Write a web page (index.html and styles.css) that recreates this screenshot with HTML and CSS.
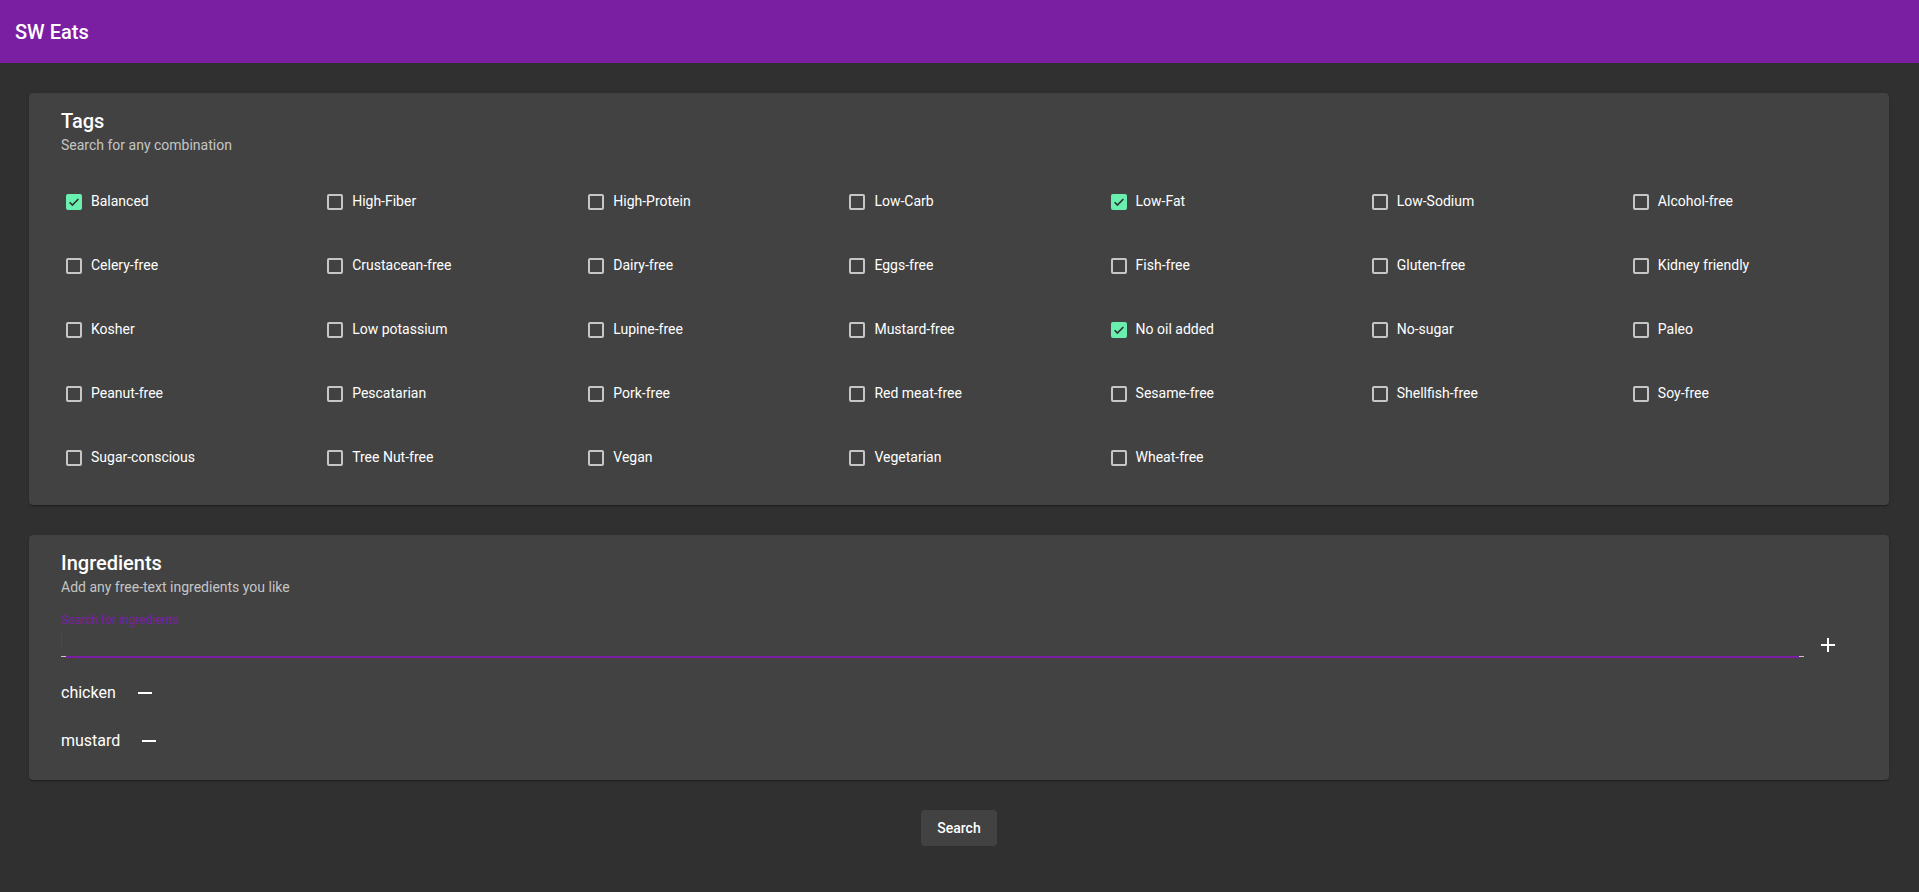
FILE: index.html
```html
<!DOCTYPE html>
<html lang="en">
<head>
<meta charset="utf-8">
<title>SW Eats</title>
<link rel="stylesheet" href="styles.css">
</head>
<body>
<header class="toolbar"><span class="brand">SW Eats</span></header>
<main class="main">
  <section class="card">
    <div class="card-head">
      <h2 class="card-title">Tags</h2>
      <p class="card-sub">Search for any combination</p>
    </div>
    <div class="tag-grid">
      <label class="tag"><span class="box checked"><svg viewBox="0 0 16 16"><polyline points="3.6,8.2 6.4,11 12.4,5"/></svg></span><span class="tag-text">Balanced</span></label>
      <label class="tag"><span class="box"></span><span class="tag-text">High-Fiber</span></label>
      <label class="tag"><span class="box"></span><span class="tag-text">High-Protein</span></label>
      <label class="tag"><span class="box"></span><span class="tag-text">Low-Carb</span></label>
      <label class="tag"><span class="box checked"><svg viewBox="0 0 16 16"><polyline points="3.6,8.2 6.4,11 12.4,5"/></svg></span><span class="tag-text">Low-Fat</span></label>
      <label class="tag"><span class="box"></span><span class="tag-text">Low-Sodium</span></label>
      <label class="tag"><span class="box"></span><span class="tag-text">Alcohol-free</span></label>

      <label class="tag"><span class="box"></span><span class="tag-text">Celery-free</span></label>
      <label class="tag"><span class="box"></span><span class="tag-text">Crustacean-free</span></label>
      <label class="tag"><span class="box"></span><span class="tag-text">Dairy-free</span></label>
      <label class="tag"><span class="box"></span><span class="tag-text">Eggs-free</span></label>
      <label class="tag"><span class="box"></span><span class="tag-text">Fish-free</span></label>
      <label class="tag"><span class="box"></span><span class="tag-text">Gluten-free</span></label>
      <label class="tag"><span class="box"></span><span class="tag-text">Kidney friendly</span></label>

      <label class="tag"><span class="box"></span><span class="tag-text">Kosher</span></label>
      <label class="tag"><span class="box"></span><span class="tag-text">Low potassium</span></label>
      <label class="tag"><span class="box"></span><span class="tag-text">Lupine-free</span></label>
      <label class="tag"><span class="box"></span><span class="tag-text">Mustard-free</span></label>
      <label class="tag"><span class="box checked"><svg viewBox="0 0 16 16"><polyline points="3.6,8.2 6.4,11 12.4,5"/></svg></span><span class="tag-text">No oil added</span></label>
      <label class="tag"><span class="box"></span><span class="tag-text">No-sugar</span></label>
      <label class="tag"><span class="box"></span><span class="tag-text">Paleo</span></label>

      <label class="tag"><span class="box"></span><span class="tag-text">Peanut-free</span></label>
      <label class="tag"><span class="box"></span><span class="tag-text">Pescatarian</span></label>
      <label class="tag"><span class="box"></span><span class="tag-text">Pork-free</span></label>
      <label class="tag"><span class="box"></span><span class="tag-text">Red meat-free</span></label>
      <label class="tag"><span class="box"></span><span class="tag-text">Sesame-free</span></label>
      <label class="tag"><span class="box"></span><span class="tag-text">Shellfish-free</span></label>
      <label class="tag"><span class="box"></span><span class="tag-text">Soy-free</span></label>

      <label class="tag"><span class="box"></span><span class="tag-text">Sugar-conscious</span></label>
      <label class="tag"><span class="box"></span><span class="tag-text">Tree Nut-free</span></label>
      <label class="tag"><span class="box"></span><span class="tag-text">Vegan</span></label>
      <label class="tag"><span class="box"></span><span class="tag-text">Vegetarian</span></label>
      <label class="tag"><span class="box"></span><span class="tag-text">Wheat-free</span></label>
    </div>
  </section>

  <section class="card card-ing">
    <div class="card-head">
      <h2 class="card-title">Ingredients</h2>
      <p class="card-sub">Add any free-text ingredients you like</p>
    </div>
    <div class="ing-body">
      <div class="field-row">
        <div class="field">
          <span class="field-label">Search for ingredients</span>
          <div class="field-input"><span class="caret"></span><input class="input" type="text" aria-label="Search for ingredients"></div>
          <div class="underline"><i class="u-end"></i><i class="u-mid"></i><i class="u-end"></i></div>
        </div>
        <span class="icon-btn add"><svg viewBox="0 0 24 24"><path d="M19 13h-6v6h-2v-6H5v-2h6V5h2v6h6v2z"/></svg></span>
      </div>
      <ul class="ing-list">
        <li class="ing"><span class="ing-name">chicken</span><span class="icon-btn remove"><svg viewBox="0 0 24 24"><path d="M19 13H5v-2h14v2z"/></svg></span></li>
        <li class="ing"><span class="ing-name">mustard</span><span class="icon-btn remove"><svg viewBox="0 0 24 24"><path d="M19 13H5v-2h14v2z"/></svg></span></li>
      </ul>
    </div>
  </section>

  <div class="actions"><button class="search-btn" type="button">Search</button></div>
</main>
</body>
</html>
```
FILE: styles.css
```css
* { box-sizing: border-box; }
html, body { margin: 0; padding: 0; }
body {
  background: #303030;
  color: #fff;
  font-family: Roboto, "Liberation Sans", sans-serif;
  min-height: 892px;
}
.toolbar {
  height: 63px;
  background: #7b1fa2;
  display: flex;
  align-items: center;
  padding: 0 15px;
}
.brand {
  font-size: 20px;
  font-weight: 500;
  line-height: 32px;
  color: #fff;
}
.main {
  padding: 30px 30px 30px 29px;
  display: flex;
  flex-direction: column;
  gap: 30px;
}
.card {
  background: #424242;
  border-radius: 4px;
  padding: 16px 16px 17px;
  box-shadow: 0 2px 1px -1px rgba(0,0,0,.2), 0 1px 1px 0 rgba(0,0,0,.14), 0 1px 3px 0 rgba(0,0,0,.12);
}
.card-ing { padding-bottom: 15px; }
.card-head { padding: 0 16px; }
.card-title {
  margin: 0;
  font-size: 20px;
  line-height: 24px;
  font-weight: 500;
}
.card-sub {
  margin: 2px 0 0;
  font-size: 14px;
  line-height: 20px;
  color: rgba(255,255,255,.7);
}
.tag-grid {
  margin-top: 13px;
  display: grid;
  grid-template-columns: repeat(7, 1fr);
  grid-auto-rows: 64px;
}
.tag {
  display: flex;
  align-items: flex-start;
  padding: 23px 0 0 21px;
  font-size: 14px;
  line-height: 20px;
  color: #fff;
}
.box {
  width: 16px;
  height: 16px;
  margin-top: 3px;
  margin-right: 9px;
  border: 2px solid rgba(255,255,255,.7);
  border-radius: 2px;
  flex: none;
  display: flex;
}
.box.checked {
  border: none;
  background: #69f0ae;
}
.box svg { width: 16px; height: 16px; }
.box polyline {
  fill: none;
  stroke: #303030;
  stroke-width: 1.6;
}
.ing-body { padding: 16px 16px 0; }
.field-row {
  display: flex;
  align-items: flex-end;
}
.field {
  flex: 1;
  display: flex;
  flex-direction: column;
}
.field-label {
  font-size: 12px;
  line-height: 14px;
  color: #7b1fa2;
}
.field-input {
  height: 29px;
  display: flex;
  align-items: flex-start;
}
.caret {
  width: 1px;
  height: 17px;
  margin-top: 5px;
  background: #7b1fa2;
  flex: none;
}
.input {
  flex: 1;
  border: none;
  outline: none;
  background: transparent;
  color: #fff;
  font: inherit;
  font-size: 16px;
  height: 24px;
  padding: 0;
}
.underline {
  display: flex;
  align-items: flex-start;
  height: 2px;
}
.u-end {
  width: 5px;
  height: 1px;
  background: rgba(255,255,255,.7);
}
.u-mid {
  flex: 1;
  height: 2px;
  background: #7b1fa2;
}
.icon-btn {
  display: flex;
  justify-content: center;
  flex: none;
}
.icon-btn svg { width: 24px; height: 24px; fill: #fff; }
.add {
  width: 48px;
  margin: 0 5px 1px 0;
}
.ing-list {
  list-style: none;
  margin: 11px 0 0;
  padding: 0;
}
.ing {
  height: 48px;
  display: flex;
  align-items: center;
  font-size: 16px;
  line-height: 24px;
}
.remove { margin-left: 17px; }
.actions {
  display: flex;
  justify-content: center;
}
.search-btn {
  height: 36px;
  padding: 0 16px;
  border: none;
  border-radius: 4px;
  background: #424242;
  color: #fff;
  font-family: Roboto, "Liberation Sans", sans-serif;
  font-size: 14px;
  font-weight: 500;
  line-height: 36px;
}
```
